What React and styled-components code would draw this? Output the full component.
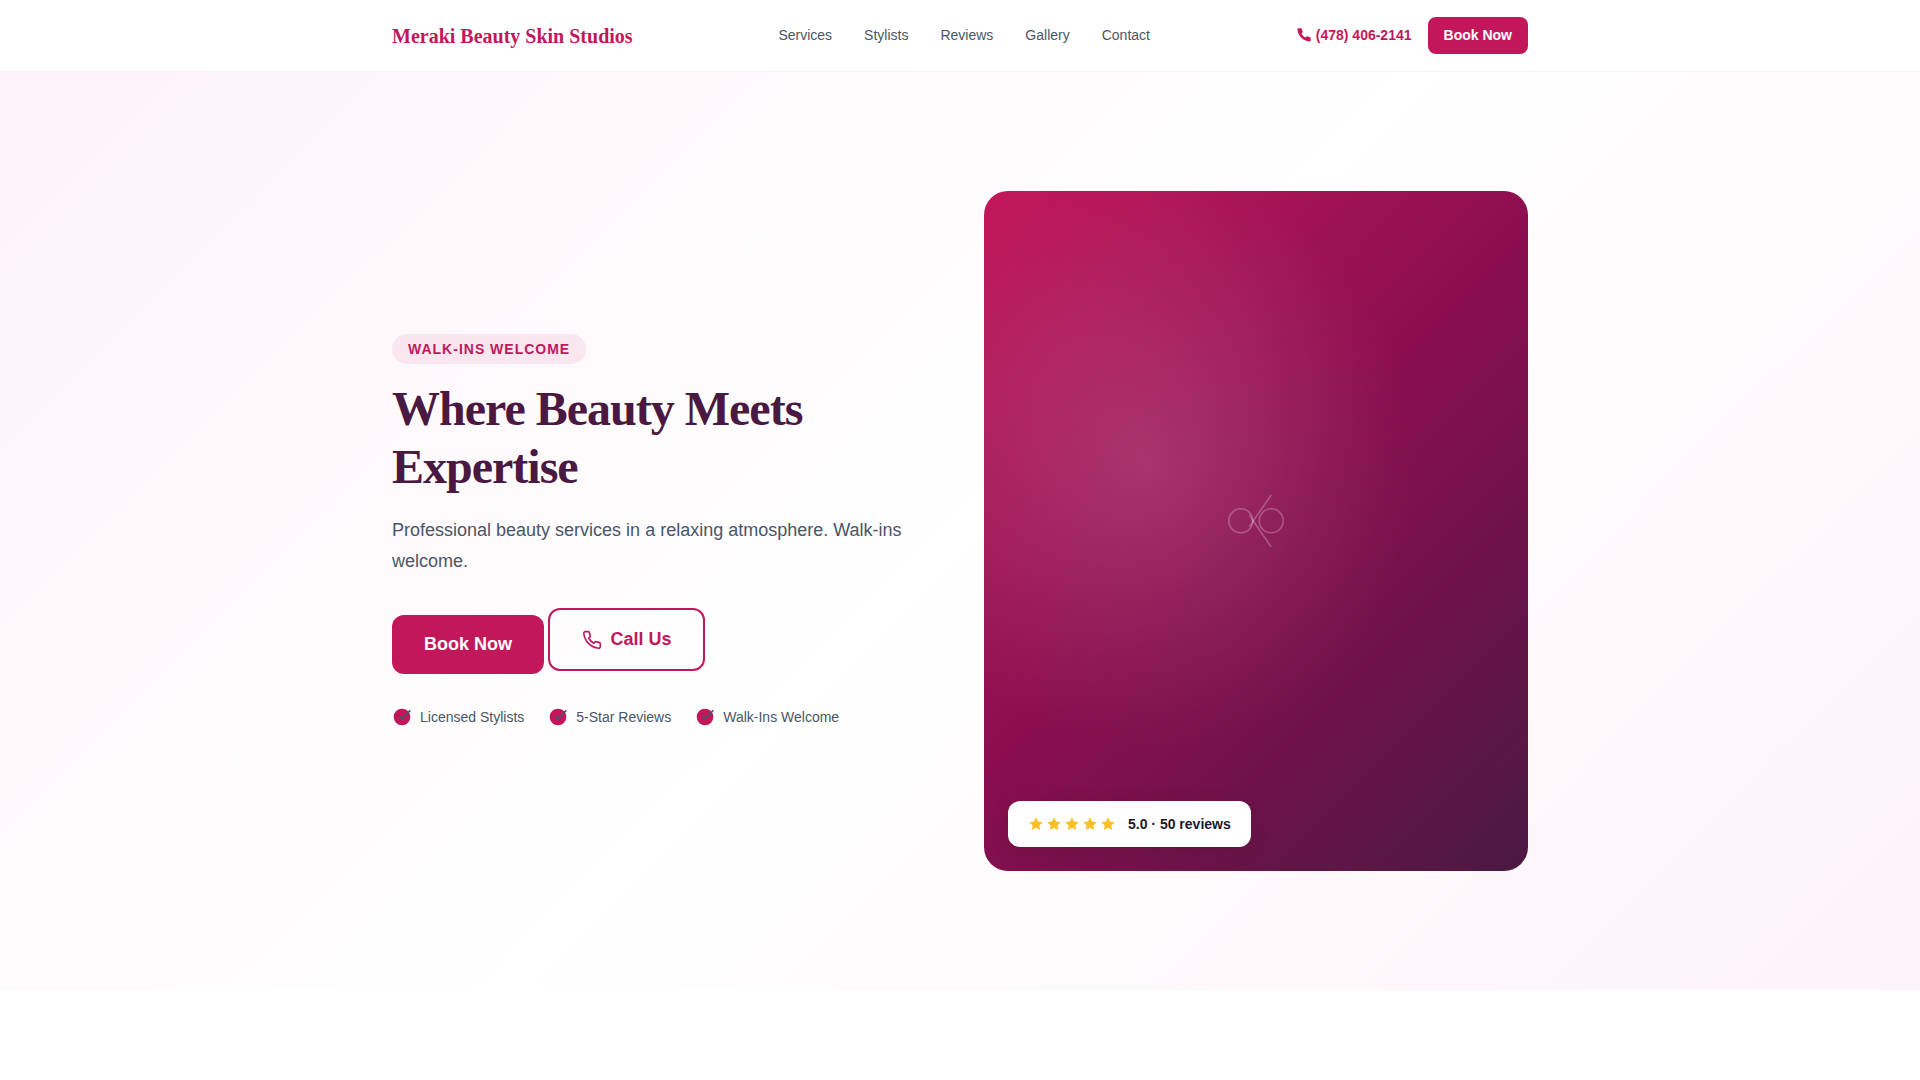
import React from "react";
import styled, { createGlobalStyle } from "styled-components";

const navLinks = ["Services", "Stylists", "Reviews", "Gallery", "Contact"];
const features = ["Licensed Stylists", "5-Star Reviews", "Walk-Ins Welcome"];

const App = () => {
  return (
    <>
      <GlobalStyle />
      <Header>
        <HeaderInner>
          <Logo href="#home">Meraki Beauty Skin Studios</Logo>
          <Nav>
            {navLinks.map(name => (
              <NavLink key={name} href={`#${name.toLowerCase()}`}>
                {name}
              </NavLink>
            ))}
          </Nav>
          <HeaderActions>
            <PhoneLink href="tel:4784062141">
              <PhoneIcon size={16} fill="currentColor" />
              (478) 406-2141
            </PhoneLink>
            <BookLink href="#book">Book Now</BookLink>
          </HeaderActions>
        </HeaderInner>
      </Header>
      <main>
        <Hero>
          <HeroGrid>
            <div>
              <Badge>Walk-Ins Welcome</Badge>
              <HeroTitle>Where Beauty Meets Expertise</HeroTitle>
              <HeroText>
                Professional beauty services in a relaxing atmosphere. Walk-ins
                welcome.
              </HeroText>
              <HeroActions>
                <PrimaryButton href="#book">Book Now</PrimaryButton>{" "}
                <OutlineButton href="tel:4784062141">
                  <PhoneIcon size={20} fill="none" stroke="currentColor" />
                  Call Us
                </OutlineButton>
              </HeroActions>
              <FeatureList>
                {features.map(feature => (
                  <Feature key={feature}>
                    <CheckCircle />
                    {feature}
                  </Feature>
                ))}
              </FeatureList>
            </div>
            <HeroVisual>
              <Scissors />
              <Rating>
                <Stars>
                  {[1, 2, 3, 4, 5].map(star => (
                    <Star key={star} />
                  ))}
                </Stars>
                <span>5.0 · 50 reviews</span>
              </Rating>
            </HeroVisual>
          </HeroGrid>
        </Hero>
      </main>
    </>
  );
};

const PhoneIcon = ({ size, fill, stroke }) => (
  <svg
    width={size}
    height={size}
    viewBox="0 0 24 24"
    fill={fill}
    stroke={stroke}
    strokeWidth="2"
  >
    <path d="M22 16.92v3a2 2 0 0 1-2.18 2 19.79 19.79 0 0 1-8.63-3.07 19.5 19.5 0 0 1-6-6 19.79 19.79 0 0 1-3.07-8.67A2 2 0 0 1 4.11 2h3a2 2 0 0 1 2 1.72 12.84 12.84 0 0 0 .7 2.81 2 2 0 0 1-.45 2.11L8.09 9.91a16 16 0 0 0 6 6l1.27-1.27a2 2 0 0 1 2.11-.45 12.84 12.84 0 0 0 2.81.7A2 2 0 0 1 22 16.92z" />
  </svg>
);

const CheckCircle = () => (
  <svg width="20" height="20" viewBox="0 0 24 24" fill="#c2185b">
    <circle cx="12" cy="12" r="10" />
    <path d="M22 4L12 14.01l-3-3" stroke="currentColor" strokeWidth="2" />
  </svg>
);

const Star = () => (
  <svg width="16" height="16" viewBox="0 0 24 24" fill="#fbbf24">
    <path d="M12 2l3.09 6.26L22 9.27l-5 4.87 1.18 6.88L12 17.77l-6.18 3.25L7 14.14 2 9.27l6.91-1.01L12 2z" />
  </svg>
);

const Scissors = () => (
  <svg
    width="80"
    height="80"
    viewBox="0 0 80 80"
    fill="none"
    stroke="#fff"
    strokeOpacity="0.25"
    strokeWidth="1.6"
  >
    <circle cx="24.8" cy="29.8" r="12" />
    <circle cx="55.2" cy="29.8" r="12" />
    <path d="M55.2 4L33.2 35.8" />
    <path d="M55.2 56L33.2 24" />
  </svg>
);

const GlobalStyle = createGlobalStyle`
  * {
    box-sizing: border-box;
  }

  body {
    margin: 0;
    background-color: #fff;
    color: #1a1a2e;
    font-family: "Liberation Sans", Arial, sans-serif;
    font-size: 16px;
    line-height: 1.6;
  }

  a {
    text-decoration: none;
  }

  svg {
    flex-shrink: 0;
  }
`;

const Header = styled.header`
  background-color: #fff;
  border-bottom: 1px solid #f3f4f6;
`;

const HeaderInner = styled.div`
  max-width: 1200px;
  min-height: 71px;
  margin: 0 auto;
  padding: 8px 32px;
  display: flex;
  flex-wrap: wrap;
  justify-content: space-between;
  align-items: center;
`;

const Logo = styled.a`
  font-family: "Liberation Serif", "Times New Roman", serif;
  font-size: 20px;
  font-weight: 700;
  color: #c2185b;
`;

const Nav = styled.nav`
  display: flex;
  gap: 32px;
`;

const NavLink = styled.a`
  font-size: 14px;
  color: #4a5568;

  &:hover {
    color: #c2185b;
  }
`;

const HeaderActions = styled.div`
  display: flex;
  align-items: center;
  gap: 16px;
`;

const PhoneLink = styled.a`
  display: flex;
  align-items: center;
  gap: 4px;
  font-size: 14px;
  font-weight: 700;
  color: #c2185b;
`;

const BookLink = styled.a`
  padding: 8px 16px;
  border-radius: 8px;
  background-color: #c2185b;
  font-size: 14px;
  font-weight: 700;
  line-height: 21px;
  color: #fff;
`;

const Hero = styled.section`
  min-height: 85vh;
  padding: 64px 0;
  display: flex;
  align-items: center;
  background: linear-gradient(135deg, #fdf2f8 0%, #fff 50%, #fdf2f8 100%);
`;

const HeroGrid = styled.div`
  width: 100%;
  max-width: 1200px;
  margin: 0 auto;
  padding: 0 32px;
  display: grid;
  grid-template-columns: 1fr 1fr;
  align-items: center;
  gap: 48px;

  @media (max-width: 900px) {
    grid-template-columns: 1fr;
  }
`;

const Badge = styled.div`
  width: fit-content;
  margin-bottom: 16px;
  padding: 4px 16px;
  border-radius: 20px;
  background-color: #f9e6ee;
  font-size: 14px;
  font-weight: 700;
  line-height: 22px;
  letter-spacing: 1px;
  text-transform: uppercase;
  color: #c2185b;
`;

const HeroTitle = styled.h1`
  margin: 0 0 19px;
  font-family: "Liberation Serif", "Times New Roman", serif;
  font-size: 48px;
  font-weight: 700;
  line-height: 58px;
  letter-spacing: -1px;
  color: #4a1942;
`;

const HeroText = styled.p`
  margin: 0 0 31px;
  font-size: 18px;
  line-height: 31px;
  color: #4a5568;
`;

const HeroActions = styled.div`
  margin-bottom: 32px;
`;

const PrimaryButton = styled.a`
  padding: 16px 32px;
  border-radius: 12px;
  display: inline-block;
  background-color: #c2185b;
  font-size: 18px;
  font-weight: 700;
  line-height: 27px;
  color: #fff;
`;

const OutlineButton = styled(PrimaryButton)`
  border: 2px solid #c2185b;
  display: inline-flex;
  align-items: center;
  gap: 8px;
  background-color: transparent;
  color: #c2185b;
`;

const FeatureList = styled.ul`
  margin: 0;
  padding: 0;
  display: flex;
  flex-wrap: wrap;
  gap: 24px;
  list-style: none;
`;

const Feature = styled.li`
  display: flex;
  align-items: center;
  gap: 8px;
  font-size: 14px;
  line-height: 22px;
  color: #4a5568;
`;

const HeroVisual = styled.div`
  position: relative;
  aspect-ratio: 4 / 5;
  border-radius: 24px;
  display: flex;
  justify-content: center;
  align-items: center;
  background: radial-gradient(
      ellipse at 30% 40%,
      rgba(255, 255, 255, 0.15) 0%,
      transparent 50%
    ),
    linear-gradient(135deg, #c2185b 0%, #880e4f 50%, #4a1942 100%);
`;

const Rating = styled.div`
  position: absolute;
  left: 24px;
  bottom: 24px;
  padding: 12px 20px;
  border-radius: 12px;
  display: flex;
  align-items: center;
  gap: 12px;
  background-color: #fff;
  box-shadow: 0 4px 20px rgba(0, 0, 0, 0.1);
  font-size: 14px;
  font-weight: 700;
  line-height: 22px;
`;

const Stars = styled.div`
  display: flex;
  gap: 2px;
`;

export default App;
